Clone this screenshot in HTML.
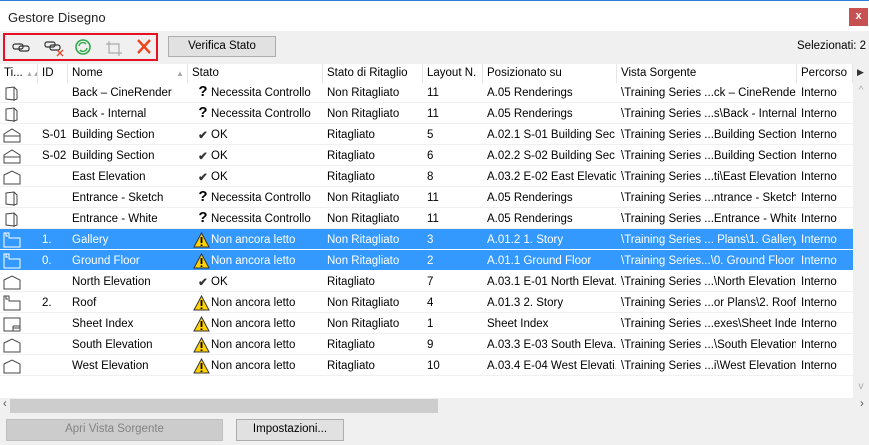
<!DOCTYPE html>
<html><head><meta charset="utf-8"><style>
*{box-sizing:border-box;margin:0;padding:0}
body{width:869px;height:445px;overflow:hidden;background:#f0f0f0;font-family:"Liberation Sans",sans-serif;font-size:11.5px;color:#000;position:relative}
.abs{position:absolute}
#title{left:0;top:0;width:869px;height:31px;background:#fff;border-top:1px solid #2b7bd8}
#title span{position:absolute;left:8px;top:9px;font-size:13px;color:#222}
#close{left:849px;top:8px;width:19px;height:18px;background:#c75050;color:#fff;font-size:11px;font-weight:bold;text-align:center;line-height:17px}
#tb{left:3px;top:33px;width:155px;height:28px;border:2px solid #e81123}
.btn{background:#e1e1e1;border:1px solid #adadad;text-align:center;line-height:19px}
#list{left:0;top:64px;width:853px;height:334px;background:#fff}
.hdr{position:absolute;top:0;height:19px;line-height:19px;padding-left:4px;border-right:1px solid #e5e5e5;white-space:nowrap;overflow:hidden}
.row{position:absolute;left:0;width:853px;height:21px;border-bottom:1px solid #f0f0f0}
.row.sel{background:#3399ff;color:#fff;border-bottom-color:#fff}
.c{position:absolute;top:5px;white-space:nowrap;overflow:hidden}
.ico{position:absolute;left:3px;top:3px}
.st{position:absolute;left:196px;top:4px;width:14px;text-align:center;font-weight:bold}
</style></head><body>
<div id="title" class="abs"><span>Gestore Disegno</span></div>
<div id="close" class="abs">x</div>
<div id="tb" class="abs">
<svg width="151" height="24" viewBox="0 0 151 24">
<g fill="none" stroke="#333" stroke-width="1.2">
<rect x="8" y="9" width="10" height="5" rx="2"/><rect x="14" y="11" width="10" height="5" rx="2"/>
<rect x="40" y="7" width="10" height="5" rx="2"/><rect x="45" y="10" width="10" height="5" rx="2"/>
</g>
<path d="M52 15l6 6M58 15l-6 6" stroke="#e8452c" stroke-width="1.3"/>
<circle cx="78" cy="12" r="7" fill="none" stroke="#2ea94a" stroke-width="1.6"/>
<path d="M74 11a4 4 0 0 1 7-2M82 13a4 4 0 0 1-7 2" fill="none" stroke="#2ea94a" stroke-width="1.4"/>
<path d="M104 6v12h13M101 9h13v12" fill="none" stroke="#aaa" stroke-width="1.2"/>
<path d="M133 5l12 13M145 5l-12 13" stroke="#f0421c" stroke-width="2.4"/>
</svg></div>
<div class="abs btn" style="left:168px;top:36px;width:108px;height:21px">Verifica Stato</div>
<div class="abs" style="left:797px;top:40px;white-space:nowrap">Selezionati: 2</div>
<div id="list" class="abs">
<div class="hdr" style="left:0;width:38px">Ti... <span style="color:#aaa;font-size:7px">▲▲</span></div>
<div class="hdr" style="left:38px;width:30px">ID</div>
<div class="hdr" style="left:68px;width:120px">Nome<span style="position:absolute;left:108px;color:#aaa;font-size:8px">▲</span></div>
<div class="hdr" style="left:188px;width:135px">Stato</div>
<div class="hdr" style="left:323px;width:100px">Stato di Ritaglio</div>
<div class="hdr" style="left:423px;width:60px">Layout N.</div>
<div class="hdr" style="left:483px;width:134px">Posizionato su</div>
<div class="hdr" style="left:617px;width:180px">Vista Sorgente</div>
<div class="hdr" style="left:797px;width:56px">Percorso</div>
<div id="rows"></div>
</div>
<div class="abs" style="left:857px;top:67px;font-size:9px;color:#333">▶</div>
<div class="abs" style="left:853px;top:83px;width:16px;height:315px;background:#f0f0f0;color:#aaa;text-align:center;font-size:10px"><div style="margin-top:2px">^</div><div style="position:absolute;top:298px;width:16px">v</div></div>
<div class="abs" style="left:0;top:398px;width:869px;height:16px;background:#f0f0f0"><div style="position:absolute;left:10px;top:1px;width:428px;height:14px;background:#cdcdcd"></div><span style="position:absolute;left:3px;top:0;color:#555">‹</span><span style="position:absolute;top:0;color:#555;left:860px">›</span></div>
<div class="abs btn" style="left:6px;top:419px;width:217px;height:22px;background:#cccccc;border-color:#bfbfbf;color:#838383">Apri Vista Sorgente</div>
<div class="abs btn" style="left:236px;top:419px;width:108px;height:22px">Impostazioni...</div>
<script>
var R=[
["cam","","Back – CineRender","q","Necessita Controllo","Non Ritagliato","11","A.05 Renderings","\\Training Series ...ck – CineRender"],
["cam","","Back - Internal","q","Necessita Controllo","Non Ritagliato","11","A.05 Renderings","\\Training Series ...s\\Back - Internal"],
["sec","S-01","Building Section","ok","OK","Ritagliato","5","A.02.1 S-01 Building Sec...","\\Training Series ...Building Section"],
["sec","S-02","Building Section","ok","OK","Ritagliato","6","A.02.2 S-02 Building Sec...","\\Training Series ...Building Section"],
["el","","East Elevation","ok","OK","Ritagliato","8","A.03.2 E-02 East Elevation","\\Training Series ...ti\\East Elevation"],
["cam","","Entrance - Sketch","q","Necessita Controllo","Non Ritagliato","11","A.05 Renderings","\\Training Series ...ntrance - Sketch"],
["cam","","Entrance - White","q","Necessita Controllo","Non Ritagliato","11","A.05 Renderings","\\Training Series ...Entrance - White"],
["pl","1.","Gallery","w","Non ancora letto","Non Ritagliato","3","A.01.2 1. Story","\\Training Series ... Plans\\1. Gallery",1],
["pl","0.","Ground Floor","w","Non ancora letto","Non Ritagliato","2","A.01.1 Ground Floor","\\Training Series...\\0. Ground Floor",1],
["el","","North Elevation","ok","OK","Ritagliato","7","A.03.1 E-01 North Elevat...","\\Training Series ...\\North Elevation"],
["pl","2.","Roof","w","Non ancora letto","Non Ritagliato","4","A.01.3 2. Story","\\Training Series ...or Plans\\2. Roof"],
["sh","","Sheet Index","w","Non ancora letto","Non Ritagliato","1","Sheet Index","\\Training Series ...exes\\Sheet Index"],
["el","","South Elevation","w","Non ancora letto","Ritagliato","9","A.03.3 E-03 South Eleva...","\\Training Series ...\\South Elevation"],
["el","","West Elevation","w","Non ancora letto","Ritagliato","10","A.03.4 E-04 West Elevati...","\\Training Series ...i\\West Elevation"]];
var ic={cam:'<path d="M3 3l8-1 3 3v9l-3 1-8-1z M11 2v14" />',sec:'<path d="M1 7l8-5 8 5v8H1z M1 9h16"/>',el:'<path d="M1 6l8-4 8 4v9H1z"/>',pl:'<path d="M1 1h5v5h11v9H1z M3 1v3h2"/>',sh:'<path d="M1 2h16v13H1z M10 10h7 M10 12h7 M10 10v5"/>'};
var h='';R.forEach(function(r,i){var s=r[9];var col=s?'#fff':'#444';
var st=r[3]=='q'?'<span class="st" style="font-size:15px;top:1px">?</span>':r[3]=='ok'?'<span class="st" style="color:'+(s?'#fff':'#333')+'">✔</span>':'<svg class="abs" style="left:193px;top:3px" width="17" height="16"><path d="M8.5 1L16 15H1z" fill="#ffd200" stroke="#333"/><path d="M8.5 5v6M8.5 12.5v1.5" stroke="#000" stroke-width="1.8"/></svg>';
h+='<div class="row'+(s?' sel':'')+'" style="top:'+(18+i*21)+'px"><svg class="ico" width="20" height="16"><g fill="none" stroke="'+col+'" stroke-width="1">'+ic[r[0]]+'</g></svg>'+
'<span class="c" style="left:42px">'+r[1]+'</span><span class="c" style="left:72px;width:115px">'+r[2]+'</span>'+st+
'<span class="c" style="left:211px">'+r[4]+'</span><span class="c" style="left:327px">'+r[5]+'</span><span class="c" style="left:427px">'+r[6]+'</span><span class="c" style="left:487px;width:129px">'+r[7]+'</span><span class="c" style="left:621px;width:175px">'+r[8]+'</span><span class="c" style="left:801px">Interno</span></div>';});
document.getElementById('rows').innerHTML=h;
</script>
</body></html>
